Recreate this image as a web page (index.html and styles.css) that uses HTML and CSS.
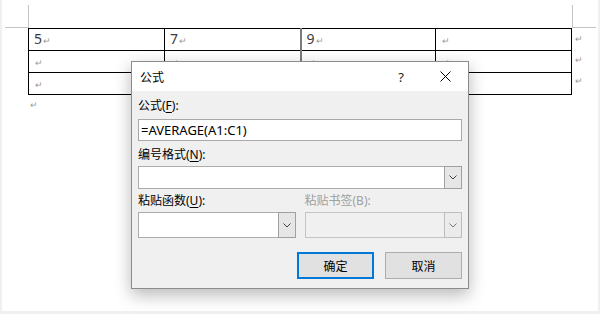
FILE: index.html
```html
<!DOCTYPE html>
<html lang="zh-CN">
<head>
    <meta charset="UTF-8">
    <meta name="viewport" content="width=device-width, initial-scale=1.0">
    <title>公式</title>
    <link rel="stylesheet" href="styles.css">
</head>
<body>
    <div class="page">
        <div class="marks">
            <div class="mark mark-left"></div>
            <div class="mark mark-right"></div>
        </div>
        <div class="doc-row">
            <table class="grid">
                <colgroup>
                    <col class="c1"><col class="c2"><col class="c3"><col class="c4">
                </colgroup>
                <tr>
                    <td>5<span class="pm">↵</span></td>
                    <td>7<span class="pm">↵</span></td>
                    <td class="sel">9<span class="pm">↵</span></td>
                    <td><span class="pm">↵</span></td>
                </tr>
                <tr>
                    <td><span class="pm">↵</span></td>
                    <td><span class="pm">↵</span></td>
                    <td class="sel"><span class="pm">↵</span></td>
                    <td><span class="pm">↵</span></td>
                </tr>
                <tr>
                    <td><span class="pm">↵</span></td>
                    <td><span class="pm">↵</span></td>
                    <td class="sel"><span class="pm">↵</span></td>
                    <td><span class="pm">↵</span></td>
                </tr>
            </table>
            <div class="row-ends">
                <span class="pm">↵</span>
                <span class="pm">↵</span>
                <span class="pm">↵</span>
            </div>
        </div>
        <div class="para"><span class="pm">↵</span></div>
    </div>

    <div class="dialog">
        <div class="titlebar">
            <span class="title">公式</span>
            <span class="help">?</span>
            <span class="close">
                <svg width="11" height="11" viewBox="0 0 11 11"><path d="M0.5 0.5 L10.5 10.5 M10.5 0.5 L0.5 10.5" stroke="#000" stroke-width="1" fill="none"/></svg>
            </span>
        </div>
        <div class="body">
            <div class="label">公式(<u>F</u>):</div>
            <div class="textbox">=AVERAGE(A1:C1)</div>

            <div class="label label-gap">编号格式(<u>N</u>):</div>
            <div class="combo">
                <div class="combo-field"></div>
                <div class="combo-arrow">
                    <svg width="8" height="5" viewBox="0 0 8 5"><path d="M0.5 0.5 L4 4 L7.5 0.5" stroke="#444" stroke-width="1" fill="none"/></svg>
                </div>
            </div>

            <div class="pair">
                <div class="label">粘贴函数(<u>U</u>):</div>
                <div class="label disabled">粘贴书签(B):</div>
                <div class="combo combo-tall">
                    <div class="combo-field"></div>
                    <div class="combo-arrow">
                        <svg width="8" height="5" viewBox="0 0 8 5"><path d="M0.5 0.5 L4 4 L7.5 0.5" stroke="#444" stroke-width="1" fill="none"/></svg>
                    </div>
                </div>
                <div class="combo combo-tall combo-off">
                    <div class="combo-field"></div>
                    <div class="combo-arrow">
                        <svg width="8" height="5" viewBox="0 0 8 5"><path d="M0.5 0.5 L4 4 L7.5 0.5" stroke="#777" stroke-width="1" fill="none"/></svg>
                    </div>
                </div>
            </div>

            <div class="buttons">
                <button class="btn btn-default">确定</button>
                <button class="btn">取消</button>
            </div>
        </div>
    </div>
</body>
</html>
```

FILE: styles.css
```css
body {
    margin: 0;
    background-color: #f0f0f0;
    font-family: "Noto Sans", "Noto Sans CJK SC", sans-serif;
    height: 314px;
    overflow: hidden;
}
.page {
    position: relative;
    margin: 0 2px;
    height: 311px;
    background-color: #ffffff;
}
.marks {
    display: flex;
    justify-content: space-between;
    padding: 5px 2px 0 3px;
}
.mark {
    width: 24px;
    height: 23px;
    box-sizing: border-box;
    border-bottom: 1px solid #c4c4c4;
}
.mark-left {
    border-right: 1px solid #c4c4c4;
}
.mark-right {
    border-left: 1px solid #c4c4c4;
}
.doc-row {
    display: flex;
    padding-left: 26px;
}
.grid {
    border-collapse: collapse;
    table-layout: fixed;
    width: 544px;
}
.c1, .c2, .c4 { width: 136px; }
.c3 { width: 135px; }
.grid tr {
    height: 21px;
}
.grid td {
    border: 1px solid #000000;
    padding: 0 0 0 5px;
    line-height: 19px;
    font-size: 14px;
    color: #3a3a3a;
    vertical-align: middle;
}
.grid td.sel {
    border-left: 2px solid #7a7a7a;
}
.pm {
    font-size: 9px;
    color: #9a9a9a;
    margin-left: 1px;
}
.row-ends {
    display: flex;
    flex-direction: column;
    padding-left: 2px;
}
.row-ends .pm {
    height: 21px;
    line-height: 22px;
}
.para {
    padding: 0 0 0 28px;
    line-height: 14px;
}
.para .pm {
    margin: 0;
}

.dialog {
    position: absolute;
    left: 131px;
    top: 61px;
    width: 338px;
    box-sizing: border-box;
    border: 1px solid #8c8c8c;
    background-color: #f0f0f0;
    box-shadow: 0 6px 16px rgba(0, 0, 0, 0.28);
    font-size: 12px;
    color: #000000;
}
.titlebar {
    display: flex;
    align-items: center;
    height: 29px;
    padding-left: 8px;
    background-color: #ffffff;
}
.title {
    flex: 1;
    font-size: 12px;
}
.help {
    width: 30px;
    margin-right: 6px;
    text-align: center;
    font-size: 13px;
    color: #222;
}
.close {
    width: 46px;
    display: flex;
    justify-content: center;
    align-items: center;
}
.body {
    padding: 7px 6px 9px 6px;
}
.label {
    line-height: 16px;
    height: 16px;
}
.label-gap {
    margin-top: 6px;
}
.label u {
    text-underline-offset: 2px;
}
.disabled {
    color: #a0a0a0;
}
.textbox {
    margin-top: 5px;
    height: 22px;
    box-sizing: border-box;
    border: 1px solid #a8a8a8;
    background-color: #ffffff;
    padding-left: 2px;
    font-size: 13px;
    line-height: 20px;
}
.combo {
    display: flex;
    margin-top: 3px;
    height: 23px;
    box-sizing: border-box;
    border: 1px solid #acacac;
    background-color: #ffffff;
}
.combo-field {
    flex: 1;
}
.combo-arrow {
    width: 16px;
    display: flex;
    justify-content: center;
    align-items: center;
    background-color: #e6e6e6;
    border: 1px solid #a0a0a0;
    margin: -1px -1px -1px 0;
}
.combo-tall {
    height: 26px;
}
.combo-off {
    background-color: #f0f0f0;
    border-color: #c4c4c4;
}
.combo-off .combo-arrow {
    background-color: #ebebeb;
    border-color: #bcbcbc;
}
.pair {
    display: grid;
    grid-template-columns: 1fr 1fr;
    column-gap: 9px;
    margin-top: 4px;
}
.buttons {
    display: flex;
    justify-content: flex-end;
    gap: 11px;
    margin-top: 14px;
}
.btn {
    width: 77px;
    height: 27px;
    box-sizing: border-box;
    border: 1px solid #adadad;
    background-color: #e1e1e1;
    font-family: "Noto Sans CJK SC", sans-serif;
    font-size: 12px;
    color: #000000;
    padding: 0;
}
.btn-default {
    border: 2px solid #0078d7;
}
```
